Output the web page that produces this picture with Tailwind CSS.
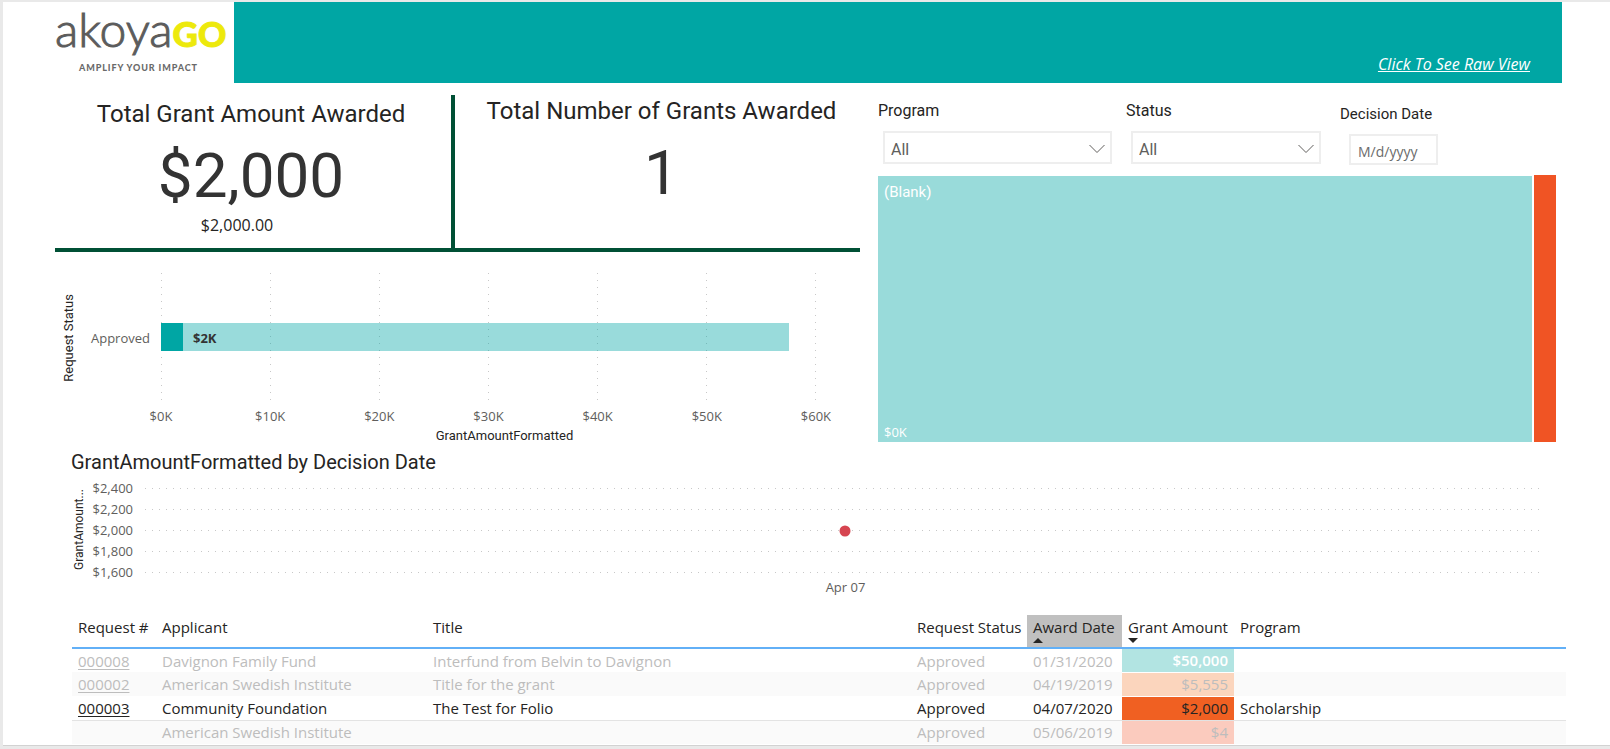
<!DOCTYPE html>
<html lang="en">
<head>
<meta charset="utf-8">
<meta name="viewport" content="width=device-width, initial-scale=1">
<title>akoyaGO Grants Dashboard</title>
<script src="https://cdn.jsdelivr.net/npm/@tailwindcss/browser@4"></script>
</head>
<body class="bg-[#e9e9e9] font-['Open_Sans','Noto_Sans',sans-serif] text-[#252423]">
<div class="mt-[2px] mb-[3px] ml-[3px] border-b border-[#d2d2d2] bg-white">

  <header class="flex h-[81px] pr-12">
    <div class="w-[231px] shrink-0 pl-[52px]">
      <div class="flex items-baseline whitespace-nowrap font-['Lato',sans-serif] leading-[54px] text-[#5c5c5c]">
        <span class="text-[48px] font-light [-webkit-text-stroke:1px_#5c5c5c]">akoya</span><span class="text-[35px] font-black text-[#ede90c] [-webkit-text-stroke:1px_#ede90c]">GO</span>
      </div>
      <p class="pl-6 font-['Lato',sans-serif] text-[9px] font-black leading-4 tracking-widest text-[#6a6a6a]">AMPLIFY YOUR IMPACT</p>
    </div>
    <div class="flex flex-1 items-end justify-end bg-[#00a6a4] pb-[7px] pr-8">
      <a href="#" class="text-[16px] italic leading-6 text-white underline">Click To See Raw View</a>
    </div>
  </header>

  <main class="pl-[52px]">
    <div class="grid grid-cols-[805fr_678fr] gap-x-[18px] pr-[54px]">

      <div>
        <section class="mt-3 flex h-[157px] border-b-4 border-[#005035] font-['Roboto',sans-serif]">
          <div class="flex w-[400px] shrink-0 flex-col border-r-4 border-[#005035] pr-1 text-center">
            <h2 class="mt-[3px] text-[24px] leading-8">Total Grant Amount Awarded</h2>
            <p class="mt-2.5 text-[62px] leading-[72px] text-[#333]">$2,000</p>
            <p class="pr-7 pt-px font-['Open_Sans',sans-serif] text-[16px] leading-6">$2,000.00</p>
          </div>
          <div class="flex flex-1 flex-col pl-2 text-center">
            <h2 class="text-[24px] leading-8">Total Number of Grants Awarded</h2>
            <p class="mt-2.5 text-[62px] leading-[72px] text-[#333]">1</p>
          </div>
        </section>

        <section class="mt-[21px] flex h-[174px]" aria-label="Grant amount by request status">
          <div class="flex w-7 items-center justify-center pb-11">
            <span class="rotate-180 whitespace-nowrap font-['Roboto',sans-serif] text-[13px] [writing-mode:vertical-rl]">Request Status</span>
          </div>
          <div class="flex w-[78px] justify-end pr-[11px] pt-[55px] text-[13px] leading-5 text-[#605e5c]">Approved</div>
          <div class="mr-11 flex-1">
            <div class="relative h-[133px]">
              <div class="flex h-full justify-between">
                <i class="w-px bg-[repeating-linear-gradient(to_bottom,#c8c8c8_0_1px,transparent_1px_7px)]"></i>
                <i class="w-px bg-[repeating-linear-gradient(to_bottom,#c8c8c8_0_1px,transparent_1px_7px)]"></i>
                <i class="w-px bg-[repeating-linear-gradient(to_bottom,#c8c8c8_0_1px,transparent_1px_7px)]"></i>
                <i class="w-px bg-[repeating-linear-gradient(to_bottom,#c8c8c8_0_1px,transparent_1px_7px)]"></i>
                <i class="w-px bg-[repeating-linear-gradient(to_bottom,#c8c8c8_0_1px,transparent_1px_7px)]"></i>
                <i class="w-px bg-[repeating-linear-gradient(to_bottom,#c8c8c8_0_1px,transparent_1px_7px)]"></i>
                <i class="w-px bg-[repeating-linear-gradient(to_bottom,#c8c8c8_0_1px,transparent_1px_7px)]"></i>
              </div>
              <div class="absolute left-0 top-[50px] flex h-7 items-center bg-[#00a6a4]/40" style="width:95.9%">
                <div class="h-full bg-[#00a6a4]" style="width:3.5%"></div>
                <span class="pl-2.5 pt-1 text-[13px] font-bold text-[#333]">$2K</span>
              </div>
            </div>
            <div class="-mx-5 flex justify-between text-center text-[13px] leading-5 text-[#605e5c]">
              <span class="w-10">$0K</span><span class="w-10">$10K</span><span class="w-10">$20K</span><span class="w-10">$30K</span><span class="w-10">$40K</span><span class="w-10">$50K</span><span class="w-10">$60K</span>
            </div>
            <p class="pl-8 text-center font-['Roboto',sans-serif] text-[13px] leading-5">GrantAmountFormatted</p>
          </div>
        </section>
      </div>

      <div class="flex flex-col">
        <form class="flex h-[92px] pt-[18px] font-['Roboto',sans-serif]">
          <div class="w-[248px]">
            <label for="program" class="block text-[16px] leading-5">Program</label>
            <div class="relative ml-[5px] mt-[10px] w-[229px]">
              <select id="program" class="h-[33px] w-full appearance-none border-2 border-[#eee] bg-white pl-1.5 pt-1 text-[16px] text-[#605e5c]"><option>All</option></select>
              <svg class="pointer-events-none absolute right-[7px] top-[13px] h-[10px] w-4" viewBox="0 0 16 10" fill="none" stroke="#605e5c"><path d="M.5 1 8 8.500 15.500 1"/></svg>
            </div>
          </div>
          <div class="w-[214px]">
            <label for="status" class="block text-[16px] leading-5">Status</label>
            <div class="relative ml-[5px] mt-[10px] w-[190px]">
              <select id="status" class="h-[33px] w-full appearance-none border-2 border-[#eee] bg-white pl-1.5 pt-1 text-[16px] text-[#605e5c]"><option>All</option></select>
              <svg class="pointer-events-none absolute right-[7px] top-[13px] h-[10px] w-4" viewBox="0 0 16 10" fill="none" stroke="#605e5c"><path d="M.5 1 8 8.500 15.500 1"/></svg>
            </div>
          </div>
          <div class="pt-[3px]">
            <label for="date" class="block text-[15px] leading-5">Decision Date</label>
            <input id="date" type="text" placeholder="M/d/yyyy" class="ml-[9px] mt-[10px] h-[31px] w-[89px] border-2 border-[#eee] pl-[7px] pt-[3px] font-['Open_Sans',sans-serif] text-[14px] placeholder:text-[#6b6b6b]">
          </div>
        </form>
        <section class="flex h-[267px] gap-[2px]" aria-label="Amount by program">
          <div class="flex flex-1 flex-col justify-between border-t border-white bg-[#99dbda] bg-clip-padding pl-1.5 pt-1.5 text-white">
            <span class="font-['Roboto',sans-serif] text-[15px] leading-5">(Blank)</span>
            <span class="text-[13px] leading-5">$0K</span>
          </div>
          <div class="w-[22px] bg-[#f05424]"></div>
        </section>
      </div>
    </div>

    <section class="pl-4 pr-[18px]" aria-label="GrantAmountFormatted by Decision Date">
      <h2 class="mt-px font-['Roboto',sans-serif] text-[20px] leading-7">GrantAmountFormatted by Decision Date</h2>
      <div class="flex pr-12">
        <div class="flex w-[15px] items-center justify-center">
          <span class="rotate-180 whitespace-nowrap font-['Roboto',sans-serif] text-[12px] leading-4 [writing-mode:vertical-rl]">GrantAmount...</span>
        </div>
        <div class="mt-[2px] w-[47px] text-right text-[13px] leading-[21px] text-[#605e5c]">
          <p>$2,400</p><p>$2,200</p><p>$2,000</p><p>$1,800</p><p>$1,600</p>
        </div>
        <div class="relative ml-3 mt-3 flex h-[85px] flex-1 flex-col justify-between">
          <i class="h-px bg-[repeating-linear-gradient(to_right,#c8c8c8_0_1px,transparent_1px_7px)]"></i>
          <i class="h-px bg-[repeating-linear-gradient(to_right,#c8c8c8_0_1px,transparent_1px_7px)]"></i>
          <i class="h-px bg-[repeating-linear-gradient(to_right,#c8c8c8_0_1px,transparent_1px_7px)]"></i>
          <i class="h-px bg-[repeating-linear-gradient(to_right,#c8c8c8_0_1px,transparent_1px_7px)]"></i>
          <i class="h-px bg-[repeating-linear-gradient(to_right,#c8c8c8_0_1px,transparent_1px_7px)]"></i>
          <b class="absolute left-1/2 top-1/2 size-[11px] -translate-x-1/2 -translate-y-1/2 rounded-full bg-[#d64550]"></b>
        </div>
      </div>
      <p class="-mt-1.5 pl-7 text-center text-[13px] leading-5 text-[#605e5c]">Apr 07</p>
    </section>

    <div class="ml-[17px] mr-11 mt-[18px] pb-px">
      <table class="w-full table-fixed border-collapse text-left text-[15px] leading-[22px]">
        <colgroup><col class="w-[84px]"><col class="w-[271px]"><col class="w-[484px]"><col class="w-[116px]"><col class="w-[95px]"><col class="w-[112px]"><col></colgroup>
        <thead>
          <tr class="h-[33px] whitespace-nowrap border-b-2 border-[#62b0f7] align-top *:px-1.5 *:pt-px *:font-normal">
            <th>Request #</th><th>Applicant</th><th>Title</th><th>Request Status</th>
            <th class="bg-[#c0c0c0]">Award Date<svg class="block h-[5px] w-[10px]" viewBox="0 0 10 5" fill="#252423"><path d="M0 5 5 0l5 5z"/></svg></th>
            <th>Grant Amount<svg class="block h-[5px] w-[10px]" viewBox="0 0 10 5" fill="#252423"><path d="M0 0h10L5 5z"/></svg></th>
            <th>Program</th>
          </tr>
        </thead>
        <tbody class="text-[#bdbdbd] [&_td]:px-1.5 [&_td]:py-0">
          <tr class="h-6"><td><a href="#" class="underline underline-offset-2">000008</a></td><td>Davignon Family Fund</td><td>Interfund from Belvin to Davignon</td><td>Approved</td><td>01/31/2020</td><td class="border-b border-white bg-[#b2e4e2] text-right font-semibold text-white">$50,000</td><td></td></tr>
          <tr class="h-6 bg-[#fafafa]"><td><a href="#" class="underline underline-offset-2">000002</a></td><td>American Swedish Institute</td><td>Title for the grant</td><td>Approved</td><td>04/19/2019</td><td class="border-b border-white bg-[#fbd5bd] text-right">$5,555</td><td></td></tr>
          <tr class="h-6 border-b border-[#e3e3e3] text-[#252423]"><td><a href="#" class="underline underline-offset-2">000003</a></td><td>Community Foundation</td><td>The Test for Folio</td><td>Approved</td><td>04/07/2020</td><td class="bg-[#f06022] text-right">$2,000</td><td>Scholarship</td></tr>
          <tr class="h-6 bg-[#fafafa]"><td></td><td>American Swedish Institute</td><td></td><td>Approved</td><td>05/06/2019</td><td class="bg-[#fbcbbe] text-right">$4</td><td></td></tr>
        </tbody>
      </table>
    </div>
  </main>
</div>
</body>
</html>
